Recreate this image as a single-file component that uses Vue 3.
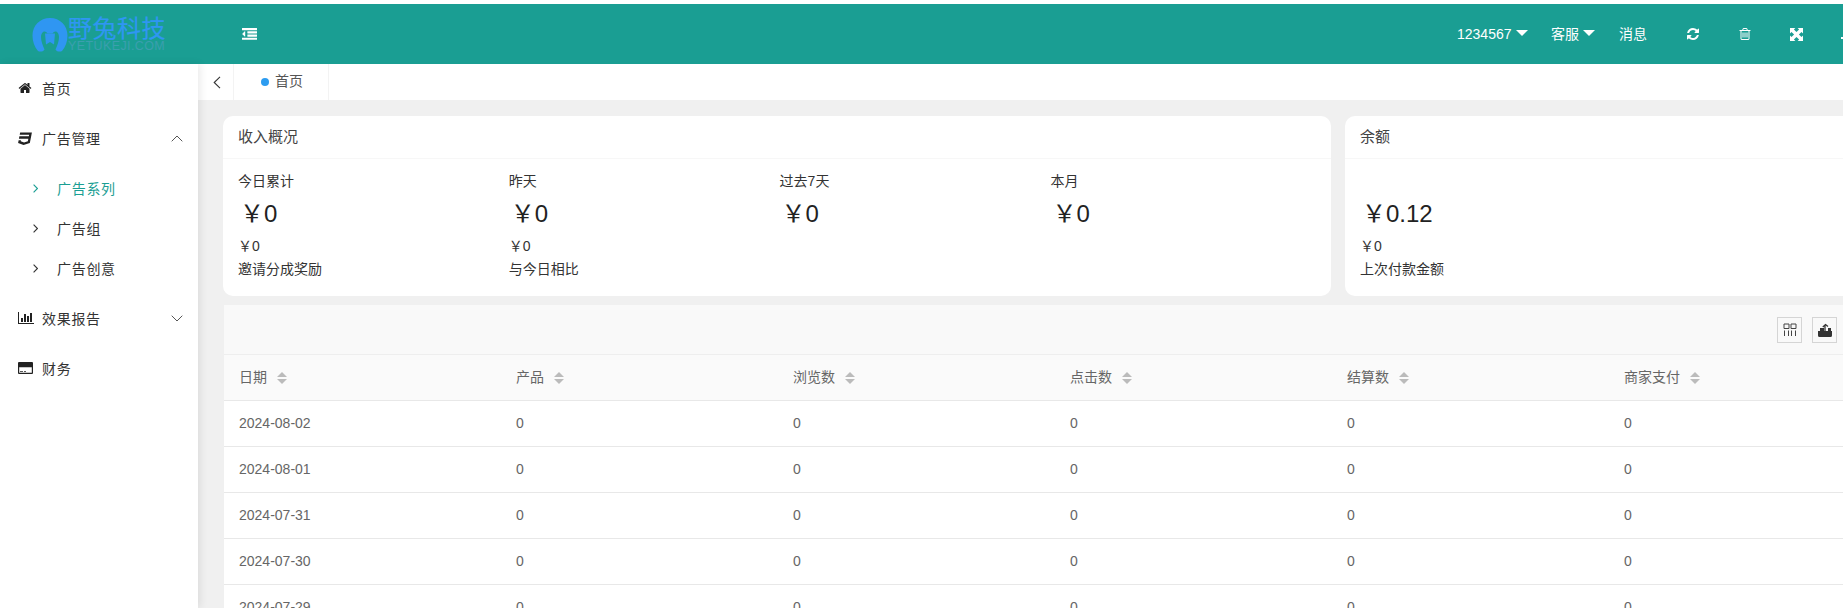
<script setup>
const cols = ['日期','产品','浏览数','点击数','结算数','商家支付']
const rows = ['2024-08-02','2024-08-01','2024-07-31','2024-07-30','2024-07-29']
const stats = [
  { label:'今日累计', value:'￥0', sub:'￥0', note:'邀请分成奖励' },
  { label:'昨天', value:'￥0', sub:'￥0', note:'与今日相比' },
  { label:'过去7天', value:'￥0' },
  { label:'本月', value:'￥0' },
]
</script>

<template>
  <div class="page">
    <header class="top">
      <div class="logo">
        <svg class="logo-mark" viewBox="0 0 36 34" width="36" height="34"><path fill="#2f96f2" fill-rule="evenodd" d="M18 0C8 0 .500 7.500.500 17.500c0 6 2 11.500 5.500 15.500 1.500 1 5 1 6.500-1.500C10.500 27 9 23 9 19c0-3 1.500-5.500 3.500-5.500 1.500 0 2.500 1 3 2h5c.5-1 1.500-2 3-2 2 0 3.500 2.500 3.500 5.500 0 4-1.500 8-3.500 12.500 1.500 2.500 5 2.500 6.500 1.500 3.500-4 5.500-9.500 5.500-15.500C35.500 7.500 28 0 18 0z"/><path fill="#2f96f2" d="M13 15.500h10l-1 11-4-2.500-4 2.500z"/></svg>
        <div class="logo-text">
          <div class="logo-cn">野兔科技</div>
          <div class="logo-en">YETUKEJI.COM</div>
        </div>
      </div>
      <svg class="fold" viewBox="0 0 1792 1792" width="15" height="15"><path fill="#fff" d="M384 544v576q0 13-9.500 22.500t-22.500 9.500q-14 0-23-9l-288-288q-9-9-9-23t9-23l288-288q9-9 23-9 13 0 22.500 9.500t9.500 22.500zm1408 768v192q0 13-9.500 22.500t-22.500 9.500h-1728q-13 0-22.500-9.500t-9.500-22.500v-192q0-13 9.500-22.500t22.500-9.500h1728q13 0 22.500 9.500t9.500 22.500zm0-384v192q0 13-9.500 22.500t-22.500 9.500h-1088q-13 0-22.500-9.500t-9.500-22.500v-192q0-13 9.500-22.500t22.500-9.500h1088q13 0 22.500 9.500t9.500 22.500zm0-384v192q0 13-9.500 22.500t-22.500 9.500h-1088q-13 0-22.500-9.500t-9.500-22.500v-192q0-13 9.500-22.500t22.500-9.500h1088q13 0 22.500 9.500t9.500 22.500zm0-384v192q0 13-9.500 22.500t-22.500 9.500h-1728q-13 0-22.500-9.500t-9.500-22.500v-192q0-13 9.500-22.500t22.500-9.500h1728q13 0 22.500 9.500t9.500 22.500z"/></svg>
      <nav class="top-right">
        <span class="ti t-user">1234567<i class="caret"></i></span>
        <span class="ti t-kf">客服<i class="caret"></i></span>
        <span class="ti t-msg">消息</span>
        <svg class="ic i1" viewBox="0 0 1792 1792" width="14" height="14"><path fill="#fff" d="M1639 1056q0 5-1 7-64 268-268 434.500t-478 166.500q-146 0-282.500-55t-243.500-157l-129 129q-19 19-45 19t-45-19-19-45v-448q0-26 19-45t45-19h448q26 0 45 19t19 45-19 45l-137 137q71 66 161 102t187 36q134 0 250-65t186-179q11-17 53-117 8-23 30-23h192q13 0 22.500 9.500t9.500 22.500zm25-800v448q0 26-19 45t-45 19h-448q-26 0-45-19t-19-45 19-45l138-138q-148-137-349-137-134 0-250 65t-186 179q-11 17-53 117-8 23-30 23h-199q-13 0-22.500-9.500t-9.500-22.500v-7q65-268 270-434.500t480-166.500q146 0 284 55.500t245 156.500l130-129q19-19 45-19t45 19 19 45z"/></svg>
        <svg class="ic i2" viewBox="0 0 1792 1792" width="14" height="14"><path fill="#fff" d="M704 736v576q0 14-9 23t-23 9h-64q-14 0-23-9t-9-23v-576q0-14 9-23t23-9h64q14 0 23 9t9 23zm256 0v576q0 14-9 23t-23 9h-64q-14 0-23-9t-9-23v-576q0-14 9-23t23-9h64q14 0 23 9t9 23zm256 0v576q0 14-9 23t-23 9h-64q-14 0-23-9t-9-23v-576q0-14 9-23t23-9h64q14 0 23 9t9 23zm128 724v-948h-896v948q0 22 7 40.500t14.500 27 10.500 8.500h832q3 0 10.500-8.500t14.500-27 7-40.500zm-672-1076h448l-48-117q-7-9-17-11h-317q-10 2-17 11zm928 32v64q0 14-9 23t-23 9h-96v948q0 83-47 143.500t-113 60.500h-832q-66 0-113-58.500t-47-141.500v-952h-96q-14 0-23-9t-9-23v-64q0-14 9-23t23-9h309l70-167q15-37 54-63t79-26h320q40 0 79 26t54 63l70 167h309q14 0 23 9t9 23z"/></svg>
        <svg class="ic i3" viewBox="0 0 14 14" width="13" height="13"><path fill="#fff" d="M0 0h5.800L4.200 1.600 7 4.400l2.800-2.800L8.200 0H14v5.800l-1.600-1.600L9.600 7l2.800 2.800L14 8.200V14H8.200l1.600-1.600L7 9.600l-2.800 2.800L5.800 14H0V8.200l1.600 1.600L4.400 7 1.600 4.200 0 5.800z"/></svg>
        <span class="edge"></span>
      </nav>
    </header>

    <div class="body">
      <aside class="side">
        <div class="m m-home">
          <svg class="mi" viewBox="0 0 1792 1792" width="14" height="14"><path fill="#222" d="M1472 992v480q0 26-19 45t-45 19h-384v-384h-256v384h-384q-26 0-45-19t-19-45v-480q0-1 .5-3t.5-3l575-474 575 474q1 2 1 6zm223-69l-62 74q-8 9-21 11h-3q-13 0-21-7l-692-577-692 577q-12 8-24 7-13-2-21-11l-62-74q-8-10-7-23.500t11-21.500l719-599q32-26 76-26t76 26l244 204v-195q0-14 9-23t23-9h192q14 0 23 9t9 23v408l219 182q10 8 11 21.500t-7 23.500z"/></svg>
          <span>首页</span>
        </div>
        <div class="m m-ad">
          <svg class="mi" viewBox="0 0 1792 1792" width="14" height="14"><path fill="#222" d="M275 192h1505l-266 1333-804 267-698-267 71-356h297l-29 147 422 161 486-161 68-339h-1208l58-297h1209l38-191h-1208z"/></svg>
          <span>广告管理</span>
          <svg class="chev" viewBox="0 0 12 7" width="12" height="7"><path fill="none" stroke="#555" d="M.7 6.300L6 1l5.300 5.300"/></svg>
        </div>
        <div class="sub active"><svg viewBox="0 0 5 9" width="5" height="9"><path fill="none" stroke="currentColor" stroke-width="1.100" d="M.6.600L4.400 4.500.6 8.400"/></svg><span>广告系列</span></div>
        <div class="sub"><svg viewBox="0 0 5 9" width="5" height="9"><path fill="none" stroke="currentColor" stroke-width="1.100" d="M.6.600L4.400 4.500.6 8.400"/></svg><span>广告组</span></div>
        <div class="sub last"><svg viewBox="0 0 5 9" width="5" height="9"><path fill="none" stroke="currentColor" stroke-width="1.100" d="M.6.600L4.400 4.500.6 8.400"/></svg><span>广告创意</span></div>
        <div class="m m-rep">
          <svg class="mi" viewBox="0 0 2048 1792" width="16" height="14"><path fill="#222" d="M640 896v512h-256v-512h256zm384-512v1024h-256v-1024h256zm1024 1152v128h-2048v-1536h128v1408h1920zm-640-896v768h-256v-768h256zm384-384v1152h-256v-1152h256z"/></svg>
          <span>效果报告</span>
          <svg class="chev" viewBox="0 0 12 7" width="12" height="7"><path fill="none" stroke="#555" d="M.7.700L6 6l5.300-5.300"/></svg>
        </div>
        <div class="m m-fin">
          <svg class="mi" viewBox="0 0 15 12" width="15" height="12"><path fill="#222" fill-rule="evenodd" d="M1 0h13a1 1 0 0 1 1 1v10a1 1 0 0 1-1 1H1a1 1 0 0 1-1-1V1a1 1 0 0 1 1-1zM1.200 5.200v5.600h12.600V5.200zM2 9h3v.8H2zM6 9h2v.8H6z"/></svg>
          <span>财务</span>
        </div>
      </aside>

      <main class="main">
        <div class="tabs">
          <div class="back"><svg viewBox="0 0 8 13" width="8" height="13"><path fill="none" stroke="#333" stroke-width="1.100" d="M7 .8L1.200 6.500 7 12.200"/></svg></div>
          <div class="tab"><i class="dot"></i>首页</div>
        </div>
        <div class="content">
          <div class="cards">
            <section class="card c1">
              <div class="card-h">收入概况</div>
              <div class="card-b grid4">
                <div v-for="s in stats" :key="s.label" class="stat">
                  <div class="s-l">{{ s.label }}</div>
                  <div class="s-v">{{ s.value }}</div>
                  <div class="s-s">{{ s.sub }}</div>
                  <div class="s-n">{{ s.note }}</div>
                </div>
              </div>
            </section>
            <section class="card c2">
              <div class="card-h">余额</div>
              <div class="card-b">
                <div class="stat">
                  <div class="s-l">&nbsp;</div>
                  <div class="s-v">￥0.12</div>
                  <div class="s-s">￥0</div>
                  <div class="s-n">上次付款金额</div>
                </div>
              </div>
            </section>
          </div>
          <div class="tbl">
            <div class="tool">
              <button class="tb"><svg viewBox="0 0 14 14" width="14" height="14"><path fill="none" stroke="#444" d="M1 1h5v4.500H1zM8 1h5v4.500H8zM1.500 7.500V13M5.500 7.500V13M8.500 7.500V13M12.500 7.500V13"/></svg></button>
              <button class="tb"><svg viewBox="0 0 14 14" width="14" height="14"><path fill="#333" d="M0 8h14v4.500a1.500 1.500 0 0 1-1.500 1.500h-11A1.500 1.500 0 0 1 0 12.500zM2 5h4v3H2zM10 5h3v3h-3z"/><path fill="none" stroke="#333" stroke-width="1.300" d="M7 8V2.500M4.800 4L7.500 1.500 10 3.500"/></svg></button>
            </div>
            <div class="tr th">
              <div v-for="c in cols" :key="c" class="td">{{ c }}<i class="sort"></i></div>
            </div>
            <div v-for="r in rows" :key="r" class="tr">
              <div class="td">{{ r }}</div>
              <div v-for="n in 5" :key="n" class="td">0</div>
            </div>
          </div>
        </div>
      </main>
    </div>
  </div>
</template>

<style>
html, body { margin: 0; overflow: hidden; background: #fff; }
</style>
<style scoped>
.page { width: 1843px; height: 608px; overflow: hidden; font-family: "Liberation Sans", "Noto Sans CJK SC", sans-serif; font-size: 14px; color: #333; padding-top: 4px; box-sizing: border-box; }
.top { height: 60px; background: #1a9e93; display: flex; align-items: center; position: relative; color: #fff; }
.logo { width: 198px; padding-left: 32px; box-sizing: border-box; display: flex; align-items: center; margin-top: 1px; flex: none; }
.logo-mark { flex: none; }
.logo-text { margin-left: 0; color: #2f96f2; line-height: 1; }
.logo-cn { font-size: 24px; line-height: 24px; white-space: nowrap; letter-spacing: .5px; -webkit-text-stroke: .15px #2f96f2; }
.logo-en { font-size: 12.500px; line-height: 11px; color: #3b9fae; letter-spacing: .4px; white-space: nowrap; }
.fold { margin-left: 44px; margin-top: 0; }
.top-right { position: absolute; left: 0; right: 0; top: 0; bottom: 0; pointer-events: none; }
.ti { position: absolute; top: 0; line-height: 60px; font-size: 14px; white-space: nowrap; }
.t-user { left: 1457px; }
.t-kf { left: 1551px; }
.t-msg { left: 1619px; }
.caret { display: inline-block; width: 0; height: 0; border: 6px solid transparent; border-top-color: #fff; border-bottom: 0; margin-left: 4px; vertical-align: 3px; }
.ic { position: absolute; top: 23px; }
.i1 { left: 1686px; }
.i2 { left: 1738px; }
.i3 { left: 1790px; top: 24px; }
.edge { position: absolute; left: 1841px; top: 33px; width: 2px; height: 2px; background: #fff; }

.body { display: flex; height: 544px; }
.side { width: 198px; flex: none; background: #fff; position: relative; z-index: 2; box-shadow: 2px 0 8px rgba(0,0,0,.09); font-size: 14px; color: #333; letter-spacing: .7px; }
.m { display: flex; align-items: center; padding-left: 18px; position: relative; }
.m span { position: absolute; left: 42px; }
.chev { position: absolute; left: 171px; }
.sub { height: 40px; display: flex; align-items: center; padding-left: 33px; color: #333; position: relative; }
.sub span { margin-left: 19px; }
.sub.active { color: #1a9e93; }
.m-home { height: 48px; }
.m-ad { height: 52px; margin-bottom: 4px; }
.sub.last { margin-bottom: 5px; }
.m-rep, .m-fin { height: 50px; }
.main { flex: 1; min-width: 0; background: #f0f0f0; overflow: hidden; }
.tabs { height: 36px; background: #fff; display: flex; }
.back { width: 36px; display: flex; align-items: center; justify-content: center; border-right: 1px solid #f3f3f3; box-sizing: border-box; padding-left: 2px; }
.tab { width: 95px; border-right: 1px solid #f3f3f3; display: flex; align-items: center; padding-left: 27px; box-sizing: border-box; font-size: 14px; color: #555; line-height: 34px; padding-bottom: 2px; }
.dot { width: 8px; height: 8px; border-radius: 50%; background: #2d9cf0; margin-right: 6px; margin-top: 2px; }
.content { padding: 16px 0 0 25px; }
.cards { display: flex; gap: 14px; width: 1700px; }
.card { background: #fff; border-radius: 10px; height: 180px; flex: none; }
.c1 { width: 1108px; }
.c2 { width: 560px; }
.card-h { height: 43px; line-height: 42px; padding-left: 15px; font-size: 15px; color: #444; border-bottom: 1px solid #f7f7f7; box-sizing: border-box; }
.card-b { padding: 13px 15px; }
.grid4 { display: grid; grid-template-columns: repeat(4, 270.800px); }
.stat { color: #333; font-size: 14px; }
.s-l { line-height: 18px; height: 18px; }
.s-v { font-size: 24px; line-height: 30px; margin-top: 9px; height: 30px; color: #222; padding-left: 2px; }
.s-s { line-height: 18px; height: 18px; margin-top: 8px; font-size: 14px; }
.s-n { line-height: 18px; height: 18px; margin-top: 5px; }
.tbl { width: 1700px; margin-top: 9px; margin-left: 1px; background: #fff; }
.tool { background: #f9f9f9; border-bottom: 1px solid #eee; display: flex; gap: 10px; align-items: center; padding-left: 1553px; box-sizing: border-box; height: 50px; }
.tb { width: 25px; height: 26px; border: 1px solid #d5d5d5; background: transparent; padding: 0; display: flex; align-items: center; justify-content: center; }
.tr { display: flex; height: 46px; border-bottom: 1px solid #e8e8e8; box-sizing: border-box; }
.th { background: #fafafa; color: #666; }
.td { width: 277px; flex: none; padding-left: 15px; box-sizing: border-box; line-height: 45px; font-size: 14px; color: #666; display: flex; align-items: center; }
.sort { display: inline-block; width: 10px; height: 12px; margin-left: 10px; position: relative; }
.sort::before, .sort::after { content: ""; position: absolute; left: 0; width: 0; height: 0; border-left: 5px solid transparent; border-right: 5px solid transparent; }
.sort::before { top: 0; border-bottom: 5px solid #bbb; }
.sort::after { bottom: 0; border-top: 5px solid #bbb; }
</style>
